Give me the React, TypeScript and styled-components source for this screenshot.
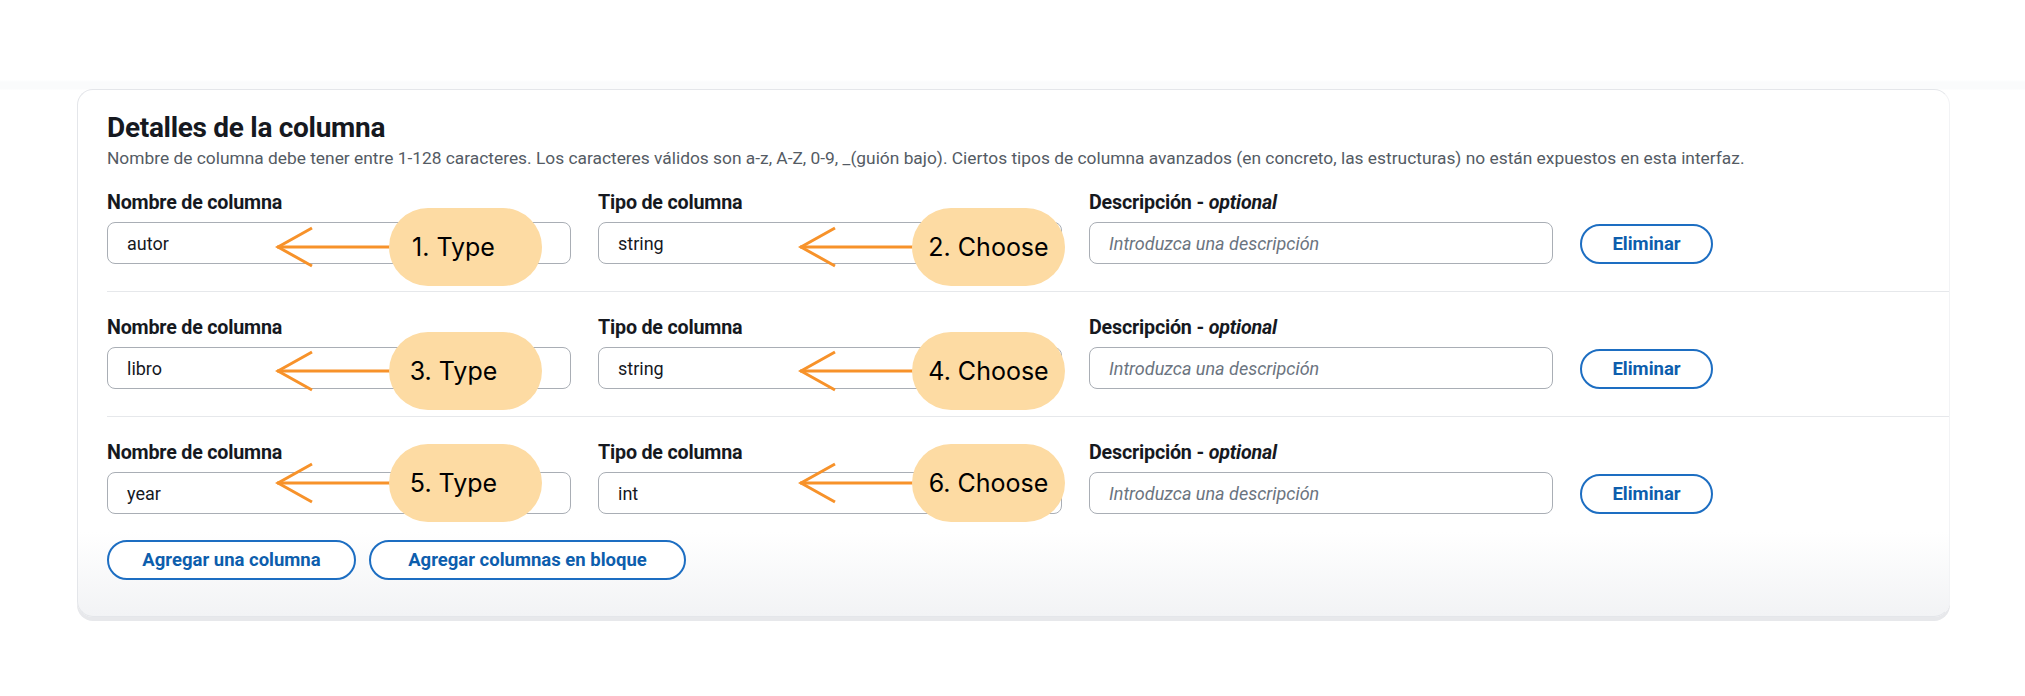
import React from "react";
import styled, { createGlobalStyle } from "styled-components";

const Global = createGlobalStyle`
  html, body { margin: 0; padding: 0; background: #ffffff; }
  body { font-family: "Roboto", "Liberation Sans", sans-serif; }
  * { box-sizing: border-box; }
`;

const Page = styled.div`
  width: 2025px;
  height: 696px;
  padding: 89px 75px 0 77px;
  background: linear-gradient(#ffffff 0px, #ffffff 80px, #fafbfc 82px, #fafbfc 89px, #ffffff 90px);
`;

const Card = styled.section`
  border: 1px solid #e4e6ea;
  border-right-color: #f2f3f5;
  border-radius: 16px;
  background: linear-gradient(#ffffff 0%, #ffffff 84%, #f2f3f5 100%);
  box-shadow: 0 4px 0 #e7e8eb;
  padding: 23px 0 36px 29px;
  display: flex;
  flex-direction: column;
`;

const Title = styled.h2`
  margin: 0;
  font-size: 28px;
  line-height: 30px;
  font-weight: 700;
  color: #16191f;
  letter-spacing: -0.3px;
`;

const Description = styled.p`
  margin: 4px 0 0;
  font-size: 17.35px;
  line-height: 22px;
  color: #545b64;
  white-space: nowrap;
`;

const Row = styled.div<{ $divider?: boolean }>`
  display: grid;
  grid-template-columns: 464px 464px 464px auto;
  column-gap: 27px;
  align-items: end;
  padding: ${(p) => (p.$divider ? "23px 0 27px" : "23px 0 0")};
  border-bottom: ${(p) => (p.$divider ? "1px solid #e6e8eb" : "none")};
  & + & {
    padding-top: 25px;
  }
`;

const Field = styled.div`
  display: flex;
  flex-direction: column;
  gap: 8px;
`;

const Label = styled.label`
  font-size: 19.7px;
  line-height: 22px;
  font-weight: 700;
  color: #16191f;
  white-space: nowrap;
  letter-spacing: -0.2px;
  em {
    font-style: italic;
  }
`;

const InputWrap = styled.div`
  position: relative;
`;

const Input = styled.div<{ $placeholder?: boolean }>`
  height: 42px;
  border: 1.5px solid #a9aeb5;
  border-radius: 8px;
  background: #ffffff;
  padding: 0 19px;
  display: flex;
  align-items: center;
  font-size: 18px;
  color: ${(p) => (p.$placeholder ? "#6b7480" : "#16191f")};
  font-style: ${(p) => (p.$placeholder ? "italic" : "normal")};
`;

const PillButton = styled.button<{ $w: number }>`
  width: ${(p) => p.$w}px;
  height: 40px;
  border: 2px solid #1d6ec2;
  border-radius: 20px;
  background: #ffffff;
  color: #0d5ead;
  font-family: "Roboto", "Liberation Sans", sans-serif;
  font-size: 18.5px;
  font-weight: 700;
  display: flex;
  align-items: center;
  justify-content: center;
  padding: 0;
`;

const Actions = styled.div`
  display: flex;
  gap: 13px;
  margin-top: 26px;
`;

const Annotation = styled.div<{ $left: number; $cy: number }>`
  position: absolute;
  left: ${(p) => p.$left}px;
  top: ${(p) => p.$cy - 39}px;
  height: 78px;
  display: flex;
  align-items: center;
  z-index: 2;
  pointer-events: none;
`;

const Bubble = styled.div<{ $padRight: number }>`
  width: 153px;
  height: 78px;
  margin-left: -2px;
  border-radius: 39px;
  background: #fddba3;
  display: flex;
  align-items: center;
  justify-content: center;
  padding-right: ${(p) => p.$padRight}px;
  font-family: "Inter", "Liberation Sans", sans-serif;
  font-size: 25px;
  color: #000000;
  white-space: nowrap;
`;

const Arrow = () => (
  <svg width="116" height="44" viewBox="0 0 116 44" fill="none">
    <path d="M2 22 H116" stroke="#f7922a" strokeWidth="3" />
    <path d="M37 3 L3 22 L37 41" stroke="#f7922a" strokeWidth="3" strokeLinejoin="miter" />
  </svg>
);

type Spec = {
  name: string;
  type: string;
  step: number;
  cy: number;
};

const rows: Spec[] = [
  { name: "autor", type: "string", step: 1, cy: 25 },
  { name: "libro", type: "string", step: 3, cy: 24 },
  { name: "year", type: "int", step: 5, cy: 11 },
];

export default function App() {
  return (
    <>
      <Global />
      <Page>
        <Card>
          <Title>Detalles de la columna</Title>
          <Description>
            Nombre de columna debe tener entre 1-128 caracteres. Los caracteres válidos son a-z, A-Z, 0-9, _(guión bajo). Ciertos tipos de columna avanzados (en concreto, las estructuras) no están expuestos en esta interfaz.
          </Description>
          {rows.map((r, i) => (
            <Row key={r.name} $divider={i < rows.length - 1}>
              <Field>
                <Label>Nombre de columna</Label>
                <InputWrap>
                  <Input>{r.name}</Input>
                  <Annotation $left={168} $cy={r.cy}>
                    <Arrow />
                    <Bubble $padRight={24}>{r.step}. Type</Bubble>
                  </Annotation>
                </InputWrap>
              </Field>
              <Field>
                <Label>Tipo de columna</Label>
                <InputWrap>
                  <Input>{r.type}</Input>
                  <Annotation $left={200} $cy={r.cy}>
                    <Arrow />
                    <Bubble $padRight={0}>{r.step + 1}. Choose</Bubble>
                  </Annotation>
                </InputWrap>
              </Field>
              <Field>
                <Label>
                  Descripción - <em>optional</em>
                </Label>
                <InputWrap>
                  <Input $placeholder>Introduzca una descripción</Input>
                </InputWrap>
              </Field>
              <PillButton $w={133}>Eliminar</PillButton>
            </Row>
          ))}
          <Actions>
            <PillButton $w={249}>Agregar una columna</PillButton>
            <PillButton $w={317}>Agregar columnas en bloque</PillButton>
          </Actions>
        </Card>
      </Page>
    </>
  );
}
